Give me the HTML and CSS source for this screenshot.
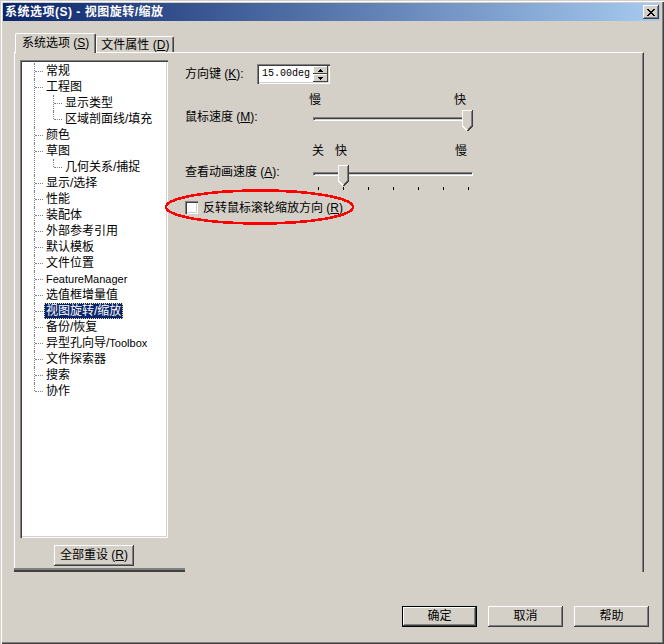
FILE: index.html
```html
<!DOCTYPE html>
<html lang="zh-CN">
<head>
<meta charset="utf-8">
<title>系统选项</title>
<link rel="stylesheet" href="styles.css">
</head>
<body>
<div class="window">
  <div class="titlebar">
    <span class="title-text">系统选项(S) - 视图旋转/缩放</span>
    <span class="close">
      <svg width="8" height="7" viewBox="0 0 8 7" shape-rendering="crispEdges"><path d="M0 0h2v1h1v1h2v-1h1v-1h2v1h-1v1h-1v1h-1v1h1v1h1v1h1v1h-2v-1h-1v-1h-2v1h-1v1h-2v-1h1v-1h1v-1h1v-1h-1v-1h-1z" fill="#000"/></svg>
    </span>
  </div>
  <div class="body">
    <div class="tabs">
      <div class="tab active">系统选项 (<u>S</u>)</div>
      <div class="tab">文件属性 (<u>D</u>)</div>
    </div>
    <div class="panel">
      <div class="left">
        <div class="treebox">
          <ul class="tree">
            <li><span class="lbl">常规</span></li>
            <li><span class="lbl">工程图</span>
              <ul class="sub">
                <li><span class="lbl">显示类型</span></li>
                <li><span class="lbl">区域剖面线/填充</span></li>
              </ul>
            </li>
            <li><span class="lbl">颜色</span></li>
            <li><span class="lbl">草图</span>
              <ul class="sub">
                <li><span class="lbl">几何关系/捕捉</span></li>
              </ul>
            </li>
            <li><span class="lbl">显示/选择</span></li>
            <li><span class="lbl">性能</span></li>
            <li><span class="lbl">装配体</span></li>
            <li><span class="lbl">外部参考引用</span></li>
            <li><span class="lbl">默认模板</span></li>
            <li><span class="lbl">文件位置</span></li>
            <li><span class="lbl lat">FeatureManager</span></li>
            <li><span class="lbl">选值框增量值</span></li>
            <li><span class="lbl selected">视图旋转/缩放</span></li>
            <li><span class="lbl">备份/恢复</span></li>
            <li><span class="lbl">异型孔向导/<span class="lat">Toolbox</span></span></li>
            <li><span class="lbl">文件探索器</span></li>
            <li><span class="lbl">搜索</span></li>
            <li><span class="lbl">协作</span></li>
          </ul>
        </div>
        <button class="btn reset">全部重设 (<u>R</u>)</button>
      </div>
      <div class="right">
        <div class="row-spin">
          <span class="field-label">方向键 (<u>K</u>):</span>
          <div class="spin">
            <span class="spin-val">15.00deg</span>
            <span class="spin-arrows">
              <span class="arrow"><svg width="5" height="3" viewBox="0 0 5 3" shape-rendering="crispEdges"><path d="M2 0h1v1h1v1h1v1h-5v-1h1v-1h1z" fill="#000"/></svg></span>
              <span class="arrow"><svg width="5" height="3" viewBox="0 0 5 3" shape-rendering="crispEdges"><path d="M0 0h5v1h-1v1h-1v1h-1v-1h-1v-1h-1z" fill="#000"/></svg></span>
            </span>
          </div>
        </div>

        <div class="scale scale-1"><span>慢</span><span>快</span></div>
        <div class="srow srow-1">
          <span class="slider-label">鼠标速度 (<u>M</u>):</span>
          <div class="slider">
            <div class="track"></div>
            <svg class="thumb thumb-1" width="11" height="21" viewBox="0 0 11 21" shape-rendering="crispEdges">
              <polygon points="0,0 11,0 11,16 5.5,21 0,16" fill="#d4d0c8"/>
              <polyline points="0.5,16 0.5,0.5 10,0.5" stroke="#fff" fill="none"/>
              <polyline points="0.5,16 5,20.5" stroke="#fff" fill="none"/>
              <polyline points="10.5,0 10.5,16 5.5,21" stroke="#404040" fill="none"/>
              <polyline points="9.5,1 9.5,15.5 5.5,19.5" stroke="#808080" fill="none"/>
            </svg>
          </div>
        </div>

        <div class="scale scale-2"><span>关</span><span class="fast">快</span><span class="slow">慢</span></div>
        <div class="srow srow-2">
          <span class="slider-label">查看动画速度 (<u>A</u>):</span>
          <div class="slider">
            <div class="track"></div>
            <svg class="thumb thumb-2" width="11" height="21" viewBox="0 0 11 21" shape-rendering="crispEdges">
              <polygon points="0,0 11,0 11,16 5.5,21 0,16" fill="#d4d0c8"/>
              <polyline points="0.5,16 0.5,0.5 10,0.5" stroke="#fff" fill="none"/>
              <polyline points="0.5,16 5,20.5" stroke="#fff" fill="none"/>
              <polyline points="10.5,0 10.5,16 5.5,21" stroke="#404040" fill="none"/>
              <polyline points="9.5,1 9.5,15.5 5.5,19.5" stroke="#808080" fill="none"/>
            </svg>
          </div>
        </div>
        <div class="ticks"><i></i><i></i><i></i><i></i><i></i><i></i><i></i></div>

        <div class="check-row">
          <span class="checkbox"></span>
          <span class="check-label">反转鼠标滚轮缩放方向 (<u>R</u>)</span>
          <svg class="annot" width="191" height="36" viewBox="0 0 191 36" shape-rendering="crispEdges">
            <ellipse cx="95.5" cy="18" rx="93.5" ry="16.5" fill="none" stroke="#ff0000" stroke-width="2.6"/>
          </svg>
        </div>
      </div>
    </div>
    <div class="buttons">
      <button class="btn default">确定</button>
      <button class="btn">取消</button>
      <button class="btn">帮助</button>
    </div>
  </div>
</div>
</body>
</html>
```

FILE: styles.css
```css
html, body {
  margin: 0;
  padding: 0;
  background: #d4d0c8;
}

body {
  font-family: "Liberation Sans", "Noto Sans CJK SC", sans-serif;
  font-size: 12px;
  color: #000;
}

u {
  text-decoration: underline;
  text-underline-offset: 1px;
}

.window {
  width: 664px;
  height: 644px;
  box-sizing: border-box;
  padding: 3px 4px 4px 3px;
  display: flex;
  flex-direction: column;
  background: #d4d0c8;
  box-shadow: inset 1px 1px #d4d0c8, inset 2px 2px #ffffff,
              inset -1px -1px #404040, inset -2px -2px #808080;
}

.titlebar {
  height: 18px;
  flex: none;
  display: flex;
  align-items: center;
  justify-content: space-between;
  padding: 0 1px 0 2px;
  background: linear-gradient(to right, #0a246a, #a6caf0);
}

.title-text {
  color: #fff;
  font-weight: bold;
  font-size: 12px;
  line-height: 18px;
  letter-spacing: 0.5px;
}

.close {
  width: 16px;
  height: 14px;
  box-sizing: border-box;
  display: flex;
  align-items: center;
  justify-content: center;
  background: #d4d0c8;
  box-shadow: inset -1px -1px #404040, inset 1px 1px #ffffff,
              inset -2px -2px #808080, inset 2px 2px #d4d0c8;
}

.body {
  flex: 1;
  padding: 12px 11px 0 11px;
  display: flex;
  flex-direction: column;
}

/* tabs */
.tabs {
  display: flex;
  align-items: flex-end;
  height: 19px;
  padding-left: 1px;
}

.tab {
  height: 16px;
  line-height: 16px;
  box-sizing: border-box;
  padding: 0 4px 0 4px;
  border-top: 1px solid #fff;
  border-left: 1px solid #fff;
  border-right: 1px solid #404040;
  border-radius: 2px 2px 0 0;
  box-shadow: inset -1px 0 #808080;
  background: #d4d0c8;
  white-space: nowrap;
}

.tab.active {
  position: relative;
  z-index: 1;
  height: 20px;
  line-height: 19px;
  margin-bottom: -1px;
  padding: 0 6px 0 6px;
}

.panel {
  width: 630px;
  height: 520px;
  box-sizing: border-box;
  flex: none;
  display: flex;
  border-top: 1px solid #fff;
  border-left: 1px solid #fff;
  border-right: 1px solid #404040;
  box-shadow: inset -1px 0 #808080;
}

/* left column */
.left {
  width: 171px;
  box-sizing: border-box;
  margin-left: -1px;
  padding: 7px 0 0 6px;
  display: flex;
  flex-direction: column;
  align-items: flex-start;
  border-bottom: 2px solid #404040;
  box-shadow: inset 0 -2px #808080;
}

.treebox {
  width: 148px;
  height: 478px;
  box-sizing: border-box;
  padding: 3px 2px 2px 2px;
  background: #fff;
  box-shadow: inset 1px 1px #808080, inset 2px 2px #404040,
              inset -1px -1px #ffffff, inset -2px -2px #d4d0c8;
  overflow: hidden;
}

.tree, .sub {
  list-style: none;
  margin: 0;
  padding: 0;
}

.tree li {
  position: relative;
  padding-left: 22px;
  line-height: 16px;
}

.tree li::before {
  content: "";
  position: absolute;
  left: 12px;
  top: 0;
  bottom: 0;
  border-left: 1px dotted #808080;
}

.tree li:last-child::before {
  bottom: auto;
  height: 8px;
}

.tree li::after {
  content: "";
  position: absolute;
  left: 13px;
  top: 8px;
  width: 8px;
  border-top: 1px dotted #808080;
}

.sub li {
  padding-left: 19px;
}

.sub li::before {
  left: 9px;
}

.sub li::after {
  left: 10px;
}

.lbl {
  display: inline-block;
  height: 16px;
  line-height: 16px;
  padding: 0 2px;
  white-space: nowrap;
}

.lat {
  font-size: 11px;
}

.lbl .lat {
  padding: 0;
}

.lbl.selected {
  background: #0a246a;
  color: #fff;
  outline: 1px dotted #e8e0a0;
  outline-offset: -1px;
}

/* buttons */
.btn {
  font-family: "Liberation Sans", "Noto Sans CJK SC", sans-serif;
  font-size: 12px;
  color: #000;
  width: 75px;
  height: 21px;
  padding: 0;
  border: none;
  background: #d4d0c8;
  box-shadow: inset -1px -1px #404040, inset 1px 1px #ffffff,
              inset -2px -2px #808080, inset 2px 2px #d4d0c8;
  line-height: 21px;
  white-space: nowrap;
}

.btn.default {
  box-shadow: inset 0 0 0 1px #000, inset -2px -2px #404040, inset 2px 2px #ffffff,
              inset -3px -3px #808080;
}

.reset {
  width: 80px;
  margin: 7px 0 0 34px;
}

/* right column */
.right {
  flex: 1;
  padding-top: 11px;
}

.row-spin {
  display: flex;
  align-items: center;
  height: 20px;
}

.field-label {
  width: 72px;
  line-height: 16px;
}

.spin {
  width: 73px;
  height: 20px;
  box-sizing: border-box;
  padding: 2px;
  display: flex;
  background: #fff;
  box-shadow: inset 1px 1px #808080, inset 2px 2px #404040,
              inset -1px -1px #ffffff, inset -2px -2px #d4d0c8;
}

.spin-val {
  flex: 1;
  font-family: "Liberation Mono", monospace;
  font-size: 10px;
  line-height: 16px;
  padding-left: 3px;
}

.spin-arrows {
  width: 15px;
  display: flex;
  flex-direction: column;
}

.arrow {
  flex: 1;
  display: flex;
  align-items: center;
  justify-content: center;
  background: #d4d0c8;
  box-shadow: inset -1px -1px #404040, inset 1px 1px #ffffff;
}

.scale {
  display: flex;
  height: 12px;
  line-height: 12px;
}

.scale-1 {
  margin: 10px 0 0 124px;
  width: 157px;
  justify-content: space-between;
}

.scale-2 {
  margin: 14px 0 0 127px;
  width: 155px;
}

.scale-2 .fast {
  margin-left: 11px;
}

.scale-2 .slow {
  margin-left: auto;
}

.srow {
  display: flex;
}

.srow-1 {
  margin-top: 4px;
}

.srow-2 {
  margin-top: 8px;
}

.slider-label {
  width: 128px;
  line-height: 14px;
}

.slider {
  position: relative;
  width: 160px;
  height: 21px;
}

.track {
  margin-top: 7px;
  height: 4px;
  box-sizing: border-box;
  border-top: 1px solid #808080;
  border-left: 1px solid #808080;
  border-bottom: 1px solid #ffffff;
  border-right: 1px solid #ffffff;
  box-shadow: inset 1px 1px #404040;
  background: #d4d0c8;
}

.thumb {
  position: absolute;
  top: 0;
}

.thumb-1 {
  left: 149px;
}

.thumb-2 {
  left: 25px;
}

.ticks {
  display: flex;
  justify-content: space-between;
  width: 160px;
  box-sizing: border-box;
  padding: 0 4px 0 5px;
  margin: 1px 0 0 128px;
  height: 3px;
}

.ticks i {
  width: 1px;
  height: 3px;
  background: #000;
}

.check-row {
  position: relative;
  display: flex;
  align-items: center;
  margin-top: 11px;
  height: 13px;
}

.checkbox {
  width: 13px;
  height: 13px;
  box-sizing: border-box;
  background: #fff;
  box-shadow: inset 1px 1px #808080, inset 2px 2px #404040,
              inset -1px -1px #ffffff, inset -2px -2px #d4d0c8;
}

.check-label {
  margin-left: 5px;
  line-height: 14px;
}

.annot {
  position: absolute;
  left: -21px;
  top: -12px;
}

.buttons {
  display: flex;
  justify-content: flex-end;
  gap: 11px;
  margin-top: 34px;
}
```
